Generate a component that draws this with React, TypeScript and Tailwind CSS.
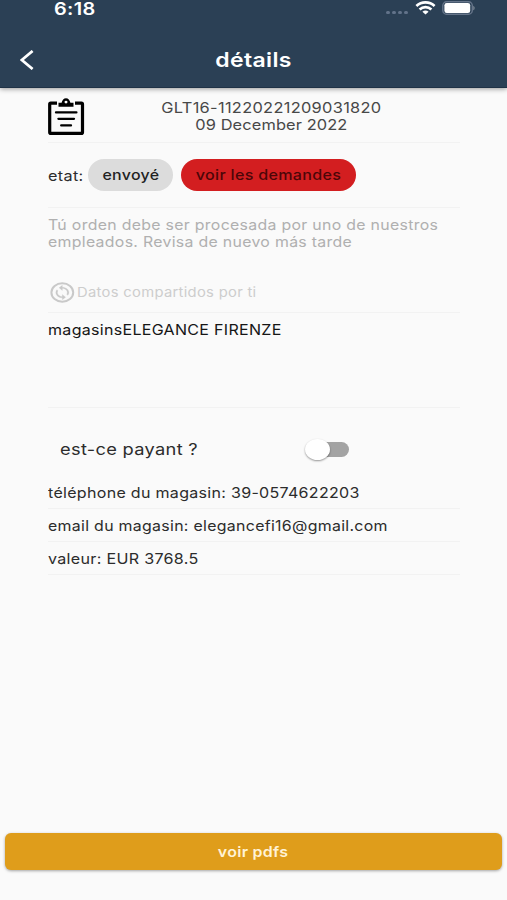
import { useState } from "react";
import type { ReactNode } from "react";

const StatusBar = () => (
  <div className="flex h-[30px] items-start justify-between pl-[54px] pr-[31px]">
    <span className="mt-[-1px] origin-left scale-x-[1.17] text-[17px] font-semibold leading-[20px]">6:18</span>
    <div className="flex items-start">
      <div className="mr-[7px] mt-[11px] flex gap-[2px]">
        {[0, 1, 2, 3].map((dot) => (
          <span key={dot} className="h-[3px] w-[4px] rounded-full bg-[#62738a]"></span>
        ))}
      </div>
      <svg className="mr-[6px] mt-[1px] h-[14px] w-[21px]" viewBox="0 0 21 14" fill="none" stroke="#fff" strokeWidth="2.7">
        <path d="M1.4 4.9C6.5 0.3 14.5 0.3 19.6 4.9" />
        <path d="M4.6 8.4C8 5.3 13 5.3 16.4 8.4" />
        <path d="M10.5 13.4L7.4 10.7C9.2 9.2 11.8 9.2 13.6 10.7Z" fill="#fff" stroke="none" />
      </svg>
      <svg className="mt-[1px] h-[14px] w-[34px]" viewBox="0 0 34 14">
        <rect x="0.8" y="0.8" width="29.5" height="12.4" rx="3.8" fill="none" stroke="#66758a" strokeWidth="1.4" />
        <rect x="2.4" y="2" width="25.8" height="10" rx="2.3" fill="#fff" />
        <path d="M31.2 4.7C33.2 5.5 33.2 8.5 31.2 9.3Z" fill="#75828f" />
      </svg>
    </div>
  </div>
);

const Header = () => (
  <header className="relative h-[88px] shrink-0 border-b border-[#1f3246] bg-[#2b4055] text-white shadow-[0_1px_5px_rgba(0,0,0,0.4)]">
    <StatusBar />
    <div className="grid h-[58px] grid-cols-[60px_1fr_60px] items-center">
      <button type="button" aria-label="Retour" className="pl-[20px] pt-[1px]">
        <svg className="h-[20px] w-[15px]" viewBox="0 0 15 20" fill="none" stroke="#fff" strokeWidth="2.8">
          <path d="M12.6 1L1.8 10L12.6 19" />
        </svg>
      </button>
      <h1 className="scale-x-[1.15] pt-[1px] text-center text-[20px] font-semibold leading-none tracking-[0.3px]">détails</h1>
    </div>
  </header>
);

const ClipboardIcon = () => (
  <svg className="h-[38px] w-[37px]" viewBox="0 0 37 38" fill="none">
    <path d="M9 5.2H2.8Q1.7 5.2 1.7 6.3V34.2Q1.7 35.4 2.8 35.4H33.4Q34.5 35.4 34.5 34.2V6.3Q34.5 5.2 33.4 5.2H27" stroke="#000" strokeWidth="3.2" />
    <path d="M10.5 8.8V4.8H13.6C14.2 2 15.8 0.2 18 0.2S21.8 2 22.4 4.8H25.5V8.8Z" fill="#000" />
    <ellipse cx="18" cy="4.1" rx="1.5" ry="1.3" fill="#fafafa" />
    <path d="M8 14.4H28.4M10.4 20.8H26M13.2 27.4H23" stroke="#000" strokeWidth="2.3" strokeLinecap="round" />
  </svg>
);

const SyncIcon = () => (
  <svg className="h-[21px] w-[25px]" viewBox="0 0 25 21" fill="none">
    <ellipse cx="12.3" cy="10.5" rx="10.9" ry="9.2" stroke="#c9c9c9" strokeWidth="2" />
    <path
      transform="translate(2.5 2.5) scale(0.82 0.667)"
      fill="#c9c9c9"
      stroke="#c9c9c9"
      strokeWidth="0.3"
      d="M12 4V1L8 5l4 4V6c3.31 0 6 2.69 6 6 0 1.01-.25 1.97-.7 2.8l1.46 1.46C19.54 15.03 20 13.57 20 12c0-4.42-3.58-8-8-8zm0 14c-3.31 0-6-2.69-6-6 0-1.01.25-1.97.7-2.8L5.24 7.74C4.46 8.97 4 10.43 4 12c0 4.42 3.58 8 8 8v3l4-4-4-4v3z"
    />
  </svg>
);

const Row = ({ className, children }: { className: string; children: ReactNode }) => (
  <div className={`flex w-[412px] border-b border-[#f2f2f2] ${className}`}>{children}</div>
);

export default function App() {
  const [isPaid, setIsPaid] = useState(false);

  return (
    <div className="flex h-[900px] w-[507px] flex-col overflow-hidden bg-[#fafafa] font-[Inter,'Liberation_Sans',sans-serif] text-[14.5px] leading-[17px] tracking-[0.27px] text-[#2c2c2c]">
      <Header />

      <main className="flex flex-1 flex-col whitespace-nowrap pl-[48px]">
        <Row className="h-[55px] pt-[10px]">
          <ClipboardIcon />
          <div className="flex-1 scale-x-[1.13] pr-[2px] pt-[1px] text-center text-[#484848]">
            <p>GLT16-11220221209031820</p>
            <p className="tracking-[0.1px]">09 December 2022</p>
          </div>
        </Row>

        <Row className="h-[65px] items-center">
          <span className="w-[40px]"><span className="inline-block origin-left scale-x-[1.12]">etat:</span></span>
          <span className="flex h-[32px] w-[85px] items-center justify-center rounded-full bg-[#dcdcdc] pb-[1px] font-medium text-[#222]">
            <span className="scale-x-[1.1]">envoyé</span>
          </span>
          <button type="button" className="ml-[8px] flex h-[32px] w-[175px] items-center justify-center rounded-full bg-[#d31e20] pb-[1px] font-medium text-[#4c0608]">
            <span className="scale-x-[1.11]">voir les demandes</span>
          </button>
        </Row>

        <Row className="h-[105px] flex-col">
          <div className="mt-[8px] origin-left scale-x-[1.095] text-[#b0b0b0]">
            <p>Tú orden debe ser procesada por uno de nuestros</p>
            <p>empleados. Revisa de nuevo más tarde</p>
          </div>
          <div className="mt-[32px] flex items-center pl-[2px] text-[13.5px] text-[#cdcdcd]">
            <SyncIcon />
            <span className="ml-[2px] origin-left scale-x-[1.095]">Datos compartidos por ti</span>
          </div>
        </Row>

        <Row className="h-[95px] pt-[8px] text-[#161616]">
          <span className="origin-left scale-x-[1.105]">magasinsELEGANCE FIRENZE</span>
        </Row>

        <div className="flex h-[67px] items-center pl-[12px] pt-[15px] text-[16px]">
          <span className="w-[245px]"><span className="inline-block origin-left scale-x-[1.14]">est-ce payant ?</span></span>
          <button
            type="button"
            role="switch"
            aria-checked={isPaid}
            aria-label="est-ce payant ?"
            onClick={() => setIsPaid(!isPaid)}
            className="flex h-[15px] w-[44px] items-center rounded-full bg-gradient-to-r from-transparent from-20% to-[#a3a3a3] to-20%"
          >
            <span className={`h-[21px] w-[25px] rounded-[50%] bg-white shadow-[0_1px_2px_rgba(0,0,0,0.4)] ${isPaid ? "ml-[19px]" : ""}`}></span>
          </button>
        </div>

        <Row className="h-[34px] items-center pt-[1px]">
          <span className="origin-left scale-x-[1.105]">téléphone du magasin: 39-0574622203</span>
        </Row>
        <Row className="h-[33px] items-center">
          <span className="origin-left scale-x-[1.097]">email du magasin: elegancefi16@gmail.com</span>
        </Row>
        <Row className="h-[33px] items-center">
          <span className="origin-left scale-x-[1.11]">valeur: EUR 3768.5</span>
        </Row>
      </main>

      <footer className="px-[5px] pb-[30px]">
        <button type="button" className="flex h-[37px] w-full items-center justify-center rounded-[6px] bg-[#df9d1b] text-[14.5px] font-semibold text-[#fff3d6] shadow-[0_1px_3px_rgba(0,0,0,0.35)]">
          <span className="scale-x-[1.1]">voir pdfs</span>
        </button>
      </footer>
    </div>
  );
}
